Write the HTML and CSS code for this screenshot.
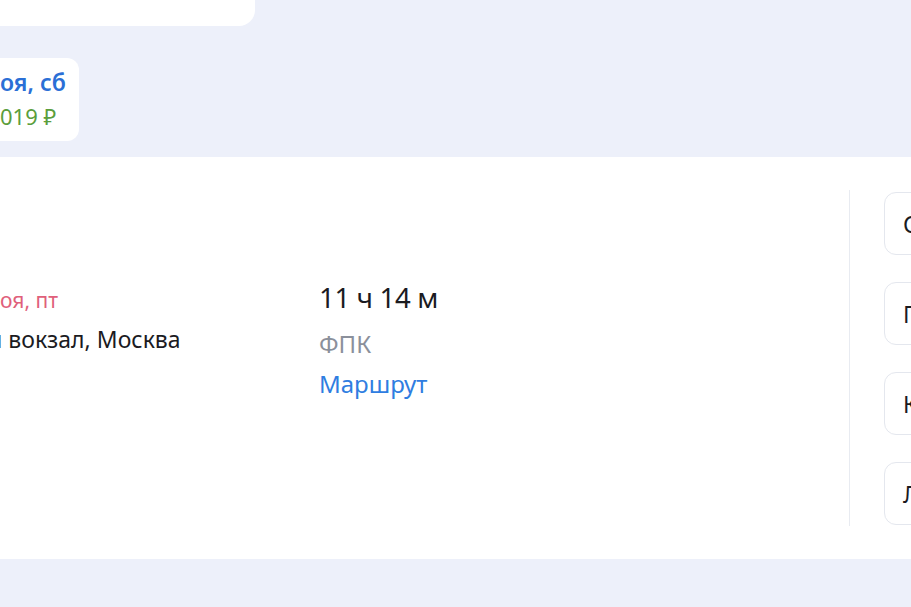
FILE: index.html
```html
<!DOCTYPE html>
<html>

<head>
    <meta charset="UTF-8">
    <title>Поезд</title>
    <link rel="stylesheet" href="styles.css">
</head>

<body>
    <div class="top-card"></div>

    <div class="date-chip">
        <div class="date-chip-day">оя, сб</div>
        <div class="date-chip-price">019 ₽</div>
    </div>

    <section class="trip">
        <div class="trip-main">
            <div class="trip-from">
                <div class="trip-date">оя, пт</div>
                <div class="trip-station">й вокзал, Москва</div>
            </div>
            <div class="trip-info">
                <div class="trip-duration">11 ч 14 м</div>
                <div class="trip-carrier">ФПК</div>
                <a class="trip-route" href="#">Маршрут</a>
            </div>
        </div>
        <div class="trip-divider"></div>
        <ul class="car-list">
            <li class="car">Сидячий</li>
            <li class="car">Плацкарт</li>
            <li class="car">Купе</li>
            <li class="car">Люкс</li>
        </ul>
    </section>
</body>

</html>
```

FILE: styles.css
```css
* {
    box-sizing: border-box;
}

body {
    font-family: 'Noto Sans', 'Open Sans', sans-serif;
    background-color: #edf0fa;
    color: #1b1b1f;
    margin: 0;
    padding: 0;
    overflow: hidden;
}

.top-card {
    width: 255px;
    height: 26px;
    background-color: #ffffff;
    border-bottom-right-radius: 16px;
}

.date-chip {
    width: 79px;
    height: 83px;
    margin-top: 32px;
    padding-top: 9px;
    background-color: #ffffff;
    border-top-right-radius: 12px;
    border-bottom-right-radius: 12px;
    overflow: hidden;
    white-space: nowrap;
}

.date-chip-day {
    font-size: 23px;
    font-weight: 600;
    line-height: 30px;
    color: #2b6fd6;
}

.date-chip-price {
    margin-top: 4px;
    font-size: 22px;
    line-height: 30px;
    color: #5b9e3c;
}

.trip {
    display: flex;
    height: 402px;
    margin-top: 16px;
    padding: 33px 0;
    background-color: #ffffff;
}

.trip-main {
    display: flex;
    flex: 1;
}

.trip-from {
    width: 319px;
    padding-top: 96px;
    overflow: hidden;
    white-space: nowrap;
}

.trip-date {
    font-size: 21px;
    line-height: 28px;
    color: #e0607b;
}

.trip-station {
    margin-top: 10px;
    margin-left: -12px;
    font-size: 23px;
    line-height: 30px;
}

.trip-info {
    display: flex;
    flex-direction: column;
    align-items: flex-start;
    padding-top: 90px;
}

.trip-duration {
    font-size: 27.5px;
    line-height: 36px;
    letter-spacing: -0.3px;
}

.trip-carrier {
    margin-top: 12px;
    font-size: 24px;
    line-height: 32px;
    color: #8b909b;
}

.trip-route {
    margin-top: 8px;
    font-size: 24px;
    line-height: 32px;
    color: #2f7de1;
    text-decoration: none;
}

.trip-divider {
    width: 1px;
    background-color: #e8ebf1;
    margin-right: 34px;
}

.car-list {
    list-style-type: none;
    margin: 0;
    padding: 2px 0 0;
    display: flex;
    flex-direction: column;
    gap: 27px;
    width: 27px;
}

.car {
    height: 63px;
    width: 120px;
    padding: 0 18px;
    display: flex;
    align-items: center;
    border: 1px solid #e4e7ee;
    border-radius: 12px;
    font-size: 23px;
    white-space: nowrap;
}
```
